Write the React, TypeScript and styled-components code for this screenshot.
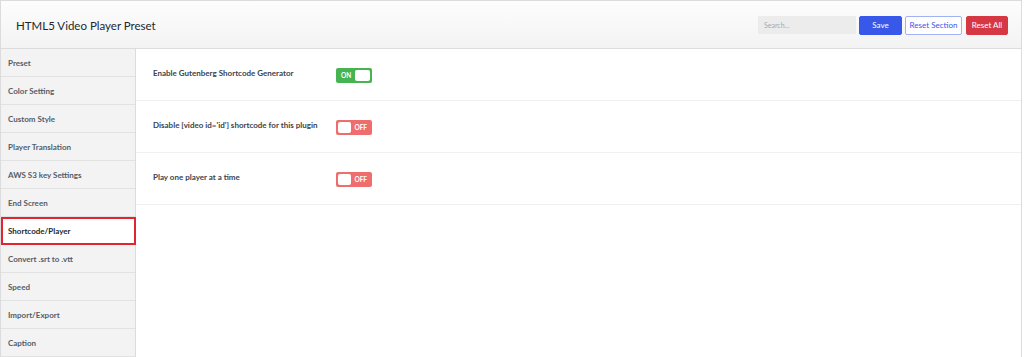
import React from "react";
import styled, { createGlobalStyle } from "styled-components";

const Global = createGlobalStyle`
  html, body { margin: 0; padding: 0; background: #fff; }
  body { font-family: Lato, "Open Sans", sans-serif; color: #3c434a; }
  * { box-sizing: border-box; }
`;

const Frame = styled.div`
  width: 1022px;
  height: 357px;
  border: 1px solid #dcdcde;
  border-bottom: none;
  display: flex;
  flex-direction: column;
  overflow: hidden;
`;

const Header = styled.div`
  height: 48px;
  flex: none;
  display: flex;
  align-items: center;
  justify-content: space-between;
  padding: 1px 13px 0 15px;
  background: linear-gradient(#fdfdfd, #f3f3f3);
  border-bottom: 1px solid #dcdcde;
`;

const Title = styled.h1`
  margin: 0;
  font-size: 11.5px;
  font-weight: 400;
  color: #23282d;
`;

const Actions = styled.div`
  display: flex;
  align-items: center;
  gap: 3px;
`;

const Search = styled.input`
  width: 98px;
  height: 18px;
  border: none;
  background: #ececec;
  font: inherit;
  font-size: 7px;
  padding: 0 6px;
  &::placeholder { color: #a7aaad; }
`;

const Btn = styled.button<{ $kind: "save" | "section" | "all" }>`
  height: 19px;
  border-radius: 2px;
  font: inherit;
  font-size: 8px;
  padding: 0;
  width: ${(p) => (p.$kind === "save" ? 43 : p.$kind === "section" ? 57 : 42)}px;
  margin-left: ${(p) => (p.$kind === "all" ? 1 : 0)}px;
  border: 1px solid
    ${(p) => (p.$kind === "save" ? "#3858e9" : p.$kind === "section" ? "#a3b2f3" : "#d63843")};
  background: ${(p) => (p.$kind === "save" ? "#3858e9" : p.$kind === "section" ? "#fff" : "#d63843")};
  color: ${(p) => (p.$kind === "section" ? "#3858e9" : "#fff")};
`;

const Body = styled.div`
  flex: 1;
  display: flex;
`;

const Sidebar = styled.ul`
  width: 135px;
  flex: none;
  margin: 0;
  padding: 0;
  list-style: none;
  background: #f3f3f3;
  border-right: 1px solid #dcdcde;
`;

const NavItem = styled.li<{ $active?: boolean }>`
  height: 28px;
  display: flex;
  align-items: center;
  padding-left: 7px;
  font-size: 8px;
  font-weight: 700;
  color: #555d66;
  border-bottom: 1px solid #e2e2e2;
  ${(p) =>
    p.$active &&
    `
    background: #fff;
    border: 2px solid #e0252f;
    margin-right: -1px;
    padding-left: 5px;
    color: #23282d;
  `}
`;

const Content = styled.div`
  flex: 1;
  display: flex;
  flex-direction: column;
`;

const Row = styled.div`
  height: 52px;
  display: flex;
  align-items: center;
  padding-left: 17px;
  border-bottom: 1px solid #f0f0f1;
`;

const Label = styled.div`
  width: 183px;
  font-size: 8px;
  font-weight: 700;
  color: #3c434a;
  margin-top: -3px;
`;

const Toggle = styled.div<{ $on: boolean }>`
  width: 36px;
  height: 15px;
  border-radius: 2px;
  background: ${(p) => (p.$on ? "#46b450" : "#ee6d6d")};
  display: flex;
  flex-direction: ${(p) => (p.$on ? "row" : "row-reverse")};
  align-items: center;
  justify-content: space-between;
  padding: 0 2px;
  margin-top: 1px;
`;

const ToggleText = styled.span`
  font-size: 6.5px;
  font-weight: 700;
  color: #fff;
  padding: 0 3px;
`;

const Knob = styled.span`
  width: 15px;
  height: 11px;
  background: #fff;
  border-radius: 2px;
`;

const nav = [
  "Preset",
  "Color Setting",
  "Custom Style",
  "Player Translation",
  "AWS S3 key Settings",
  "End Screen",
  "Shortcode/Player",
  "Convert .srt to .vtt",
  "Speed",
  "Import/Export",
  "Caption",
];

const rows = [
  { label: "Enable Gutenberg Shortcode Generator", on: true },
  { label: "Disable [video id='id'] shortcode for this plugin", on: false },
  { label: "Play one player at a time", on: false },
];

export default function App() {
  return (
    <>
      <Global />
      <Frame>
        <Header>
          <Title>HTML5 Video Player Preset</Title>
          <Actions>
            <Search placeholder="Search..." />
            <Btn $kind="save">Save</Btn>
            <Btn $kind="section">Reset Section</Btn>
            <Btn $kind="all">Reset All</Btn>
          </Actions>
        </Header>
        <Body>
          <Sidebar>
            {nav.map((n) => (
              <NavItem key={n} $active={n === "Shortcode/Player"}>
                {n}
              </NavItem>
            ))}
          </Sidebar>
          <Content>
            {rows.map((r) => (
              <Row key={r.label}>
                <Label>{r.label}</Label>
                <Toggle $on={r.on}>
                  <ToggleText>{r.on ? "ON" : "OFF"}</ToggleText>
                  <Knob />
                </Toggle>
              </Row>
            ))}
          </Content>
        </Body>
      </Frame>
    </>
  );
}
